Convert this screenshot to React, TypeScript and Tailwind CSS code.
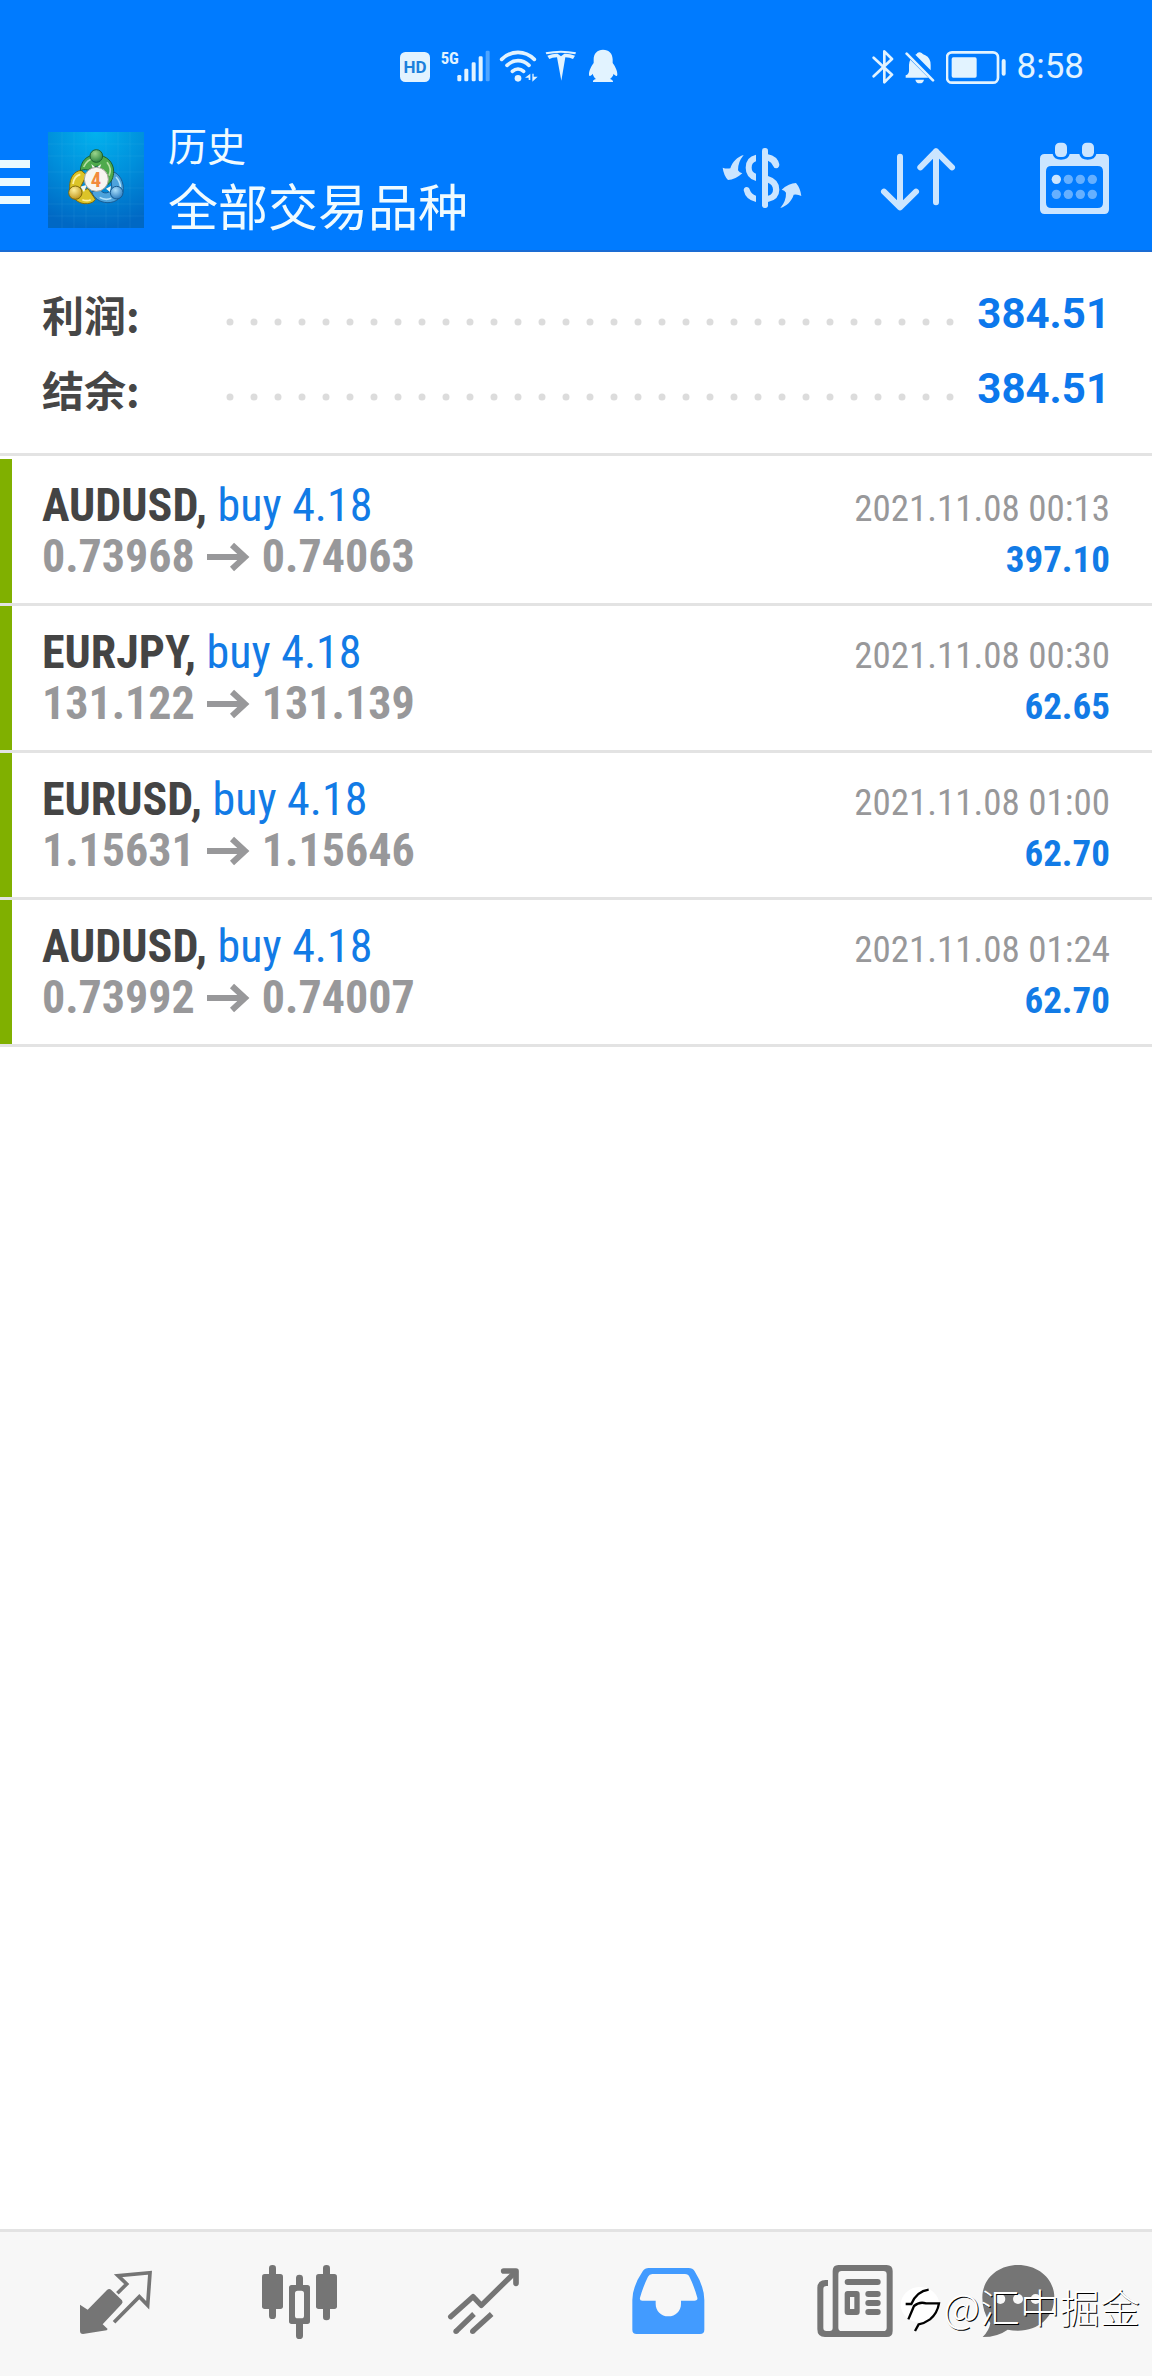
import React from 'react';

const deals = [
  { id: 1, symbol: 'AUDUSD', side: 'buy 4.18', open: '0.73968', close: '0.74063', time: '2021.11.08 00:13', profit: '397.10' },
  { id: 2, symbol: 'EURJPY', side: 'buy 4.18', open: '131.122', close: '131.139', time: '2021.11.08 00:30', profit: '62.65' },
  { id: 3, symbol: 'EURUSD', side: 'buy 4.18', open: '1.15631', close: '1.15646', time: '2021.11.08 01:00', profit: '62.70' },
  { id: 4, symbol: 'AUDUSD', side: 'buy 4.18', open: '0.73992', close: '0.74007', time: '2021.11.08 01:24', profit: '62.70' },
];

const summary = [
  { label: '利润:', value: '384.51' },
  { label: '结余:', value: '384.51' },
];

const StatusBar = () => (
  <div className="flex h-[110px] items-center justify-between pt-6 pr-[68px] pl-[400px] text-[#e2f3ff]">
    <div className="flex items-center gap-[10px]">
      <svg width="30" height="38" viewBox="60 57 90 114" fill="currentColor">
        <rect x="60" y="69" width="90" height="90" rx="16" />
        <text x="105" y="133" textAnchor="middle" fontSize="51" className="fill-[#1b80dc] font-['Roboto',sans-serif] font-bold">HD</text>
      </svg>
      <svg width="50" height="38" viewBox="181 57 150 114" fill="currentColor">
        <text x="183" y="105" fontSize="50" className="font-['Roboto_Condensed','Roboto',sans-serif] font-bold">5G</text>
        <rect x="233" y="138" width="12" height="19" rx="4" />
        <rect x="254" y="119" width="12" height="38" rx="4" />
        <rect x="276" y="100" width="12" height="57" rx="4" />
        <rect x="297" y="82" width="12" height="75" rx="4" />
        <rect x="318" y="65" width="12" height="92" rx="4" opacity="0.35" />
      </svg>
      <svg className="overflow-visible" width="36" height="38" viewBox="360 57 108 114" fill="currentColor">
        <g fill="none" stroke="currentColor" strokeWidth="11" strokeLinecap="round">
          <path d="M365 91Q386 70 414 70Q442 70 463 91" />
          <path d="M381 109Q396 95 414 95Q432 95 447 109" />
          <path d="M397 127Q405 120 414 120Q423 120 431 127" />
        </g>
        <circle cx="414" cy="148" r="10" />
        <path d="M451 134V153H446V146H435ZM457 158V134H461V143H473Z" />
      </svg>
      <svg className="overflow-visible" width="32" height="38" viewBox="498 57 96 114" fill="currentColor">
        <path d="M497 70Q543 61 588 70L586 76Q543 67 499 76Z" />
        <path d="M502 80Q520 73 533 74L543 82L553 74Q568 73 585 80L579 90Q570 85 556 85L544 155L531 85Q516 85 508 90Z" />
      </svg>
      <svg width="30" height="38" viewBox="624 57 90 114" fill="currentColor">
        <path d="M669 62C652 62 641 74 641 91V102C632 114 626 128 627 137C628 144 634 140 638 134C640 142 644 147 648 150C641 152 638 155 639 159H699C700 155 696 152 690 150C695 146 699 141 701 134C705 140 711 144 712 137C713 128 707 114 698 102V91C698 74 687 62 669 62Z" />
      </svg>
    </div>
    <div className="flex items-center gap-[11px]">
      <svg width="22" height="38" viewBox="67 54 66 114" fill="none" stroke="currentColor" strokeWidth="8" strokeLinecap="round" strokeLinejoin="round">
        <path d="M72 83L127 134L104 157V64L127 87L72 139" />
      </svg>
      <svg width="30" height="38" viewBox="166 54 90 114" fill="currentColor">
        <path d="M197 74Q202 72 203 69Q209 65 216 69Q219 73 227 76Q243 84 243 105V121ZM182 89L236 143H168V136Q178 132 178 122V105Q178 96 182 89ZM197 149H223Q221 160 210 160Q199 160 197 149Z" />
        <path d="M171 71L250 151" fill="none" stroke="currentColor" strokeWidth="8" strokeLinecap="round" />
      </svg>
      <svg width="60" height="38" viewBox="289 54 180 114" fill="currentColor">
        <rect x="292" y="67" width="153" height="91" rx="15" fill="none" stroke="currentColor" strokeWidth="8" />
        <rect x="306" y="82" width="75" height="61" rx="5" />
        <rect x="456" y="87" width="12" height="50" rx="6" />
      </svg>
      <span className="font-['Roboto',sans-serif] text-[35px] leading-[38px]">8:58</span>
    </div>
  </div>
);

const AppLogo = () => (
  <svg width="96" height="96" viewBox="144 66 288 288" aria-hidden="true">
    <defs>
      <radialGradient id="sky" cx="0.5" cy="0" r="1">
        <stop offset="0" stopColor="#02b2ee" />
        <stop offset="0.5" stopColor="#0090dc" />
        <stop offset="1" stopColor="#0068c4" />
      </radialGradient>
      <radialGradient id="green" cx="0.4" cy="0.3" r="0.8">
        <stop offset="0" stopColor="#9bd58c" />
        <stop offset="1" stopColor="#1e7a35" />
      </radialGradient>
      <radialGradient id="gold" cx="0.4" cy="0.3" r="0.8">
        <stop offset="0" stopColor="#fff09a" />
        <stop offset="1" stopColor="#b88a0c" />
      </radialGradient>
      <radialGradient id="azure" cx="0.4" cy="0.3" r="0.8">
        <stop offset="0" stopColor="#a9defa" />
        <stop offset="1" stopColor="#1a6fb8" />
      </radialGradient>
    </defs>
    <rect x="144" y="66" width="288" height="288" fill="url(#sky)" />
    <path d="M186 66V354M222 66V354M258 66V354M318 66V354M354 66V354M390 66V354M144 102H432M144 138H432M144 186H432M144 234H432M144 282H432M144 318H432" stroke="#6fd0f5" strokeWidth="1" opacity="0.3" />
    <g strokeWidth="3" strokeLinejoin="round">
      <path d="M331 184C350 184 370 205 370 236C370 262 347 279 321 278C300 277 282 265 275 246L300 238C310 256 330 248 336 238Z" fill="#4da3dc" stroke="#185c94" />
      <path d="M243 181C221 184 209 204 209 230C209 262 236 284 262 281C274 280 282 275 286 268L264 236C255 239 247 240 240 234L260 195Z" fill="#dcc428" stroke="#806908" />
      <path d="M241 182C242 155 259 135 288 135C320 135 341 157 341 184C341 202 334 217 323 224L312 202C314 190 307 176 292 168L262 180C255 177 247 180 241 182Z" fill="#4faa4c" stroke="#1d6130" />
      <path d="M251 171Q263 146 281 147M327 197Q337 177 321 157" fill="none" stroke="#b7e0a7" strokeWidth="5" />
      <path d="M219 222Q222 198 241 193M247 269Q262 275 272 269" fill="none" stroke="#fff0a0" strokeWidth="5" />
      <path d="M348 201Q362 217 361 232M299 262Q315 272 334 265" fill="none" stroke="#b0e0fa" strokeWidth="5" />
    </g>
    <path d="M274 162L288 174L304 162L298 178H279ZM241 230L252 246L261 224ZM318 236L333 228L330 246Z" fill="#f3f8f2" />
    <circle cx="289" cy="138" r="19" fill="url(#green)" stroke="#1d6130" strokeWidth="3" />
    <circle cx="226" cy="248" r="20" fill="url(#gold)" stroke="#806908" strokeWidth="3" />
    <circle cx="350" cy="248" r="19" fill="url(#azure)" stroke="#185c94" strokeWidth="3" />
    <circle cx="289" cy="208" r="36" fill="#f7f5f2" stroke="#a2a49a" strokeWidth="3" />
    <text x="288" y="231" textAnchor="middle" fontSize="62" className="fill-[#f28a3c] font-['Roboto_Condensed','Roboto',sans-serif] font-bold">4</text>
  </svg>
);

const Toolbar = () => (
  <div className="flex h-[140px] items-center">
    <button type="button" aria-label="menu" className="mr-[18px] flex w-[30px] flex-col gap-[10px] pt-1">
      <span className="h-2 w-full bg-[#eafaff]" />
      <span className="h-2 w-full bg-[#eafaff]" />
      <span className="h-2 w-full bg-[#eafaff]" />
    </button>
    <AppLogo />
    <div className="ml-6 flex-1 pb-2 font-['Noto_Sans_CJK_SC',sans-serif] text-[#f0fbff]">
      <p className="text-[39px] leading-[56px]">历史</p>
      <h1 className="text-[50px] leading-[64px]">全部交易品种</h1>
    </div>
    <div className="flex text-[#cbe5ff]">
      <button type="button" aria-label="currency" className="flex w-[156px] justify-center">
        <svg width="96" height="96" viewBox="42 36 288 288" fill="currentColor">
          <path d="M131 105C112 111 97 125 91 145Q79 147 68 143Q71 166 84 180Q105 180 127 160Q118 158 114 151Q113 127 131 105Z" />
          <path d="M241 264C260 258 275 244 281 224Q293 222 304 228Q301 204 288 189Q267 189 245 209Q254 211 258 218Q259 242 241 264Z" />
          <rect x="186" y="84" width="18" height="180" rx="8" />
          <path d="M168 104V124Q155 128 155 143Q155 156 168 161V183Q137 174 137 143Q137 111 168 104Z" />
          <path d="M204 103Q232 108 238 133Q238 144 229 145Q222 145 219 137Q215 126 204 122ZM204 168Q238 178 238 209Q238 239 204 246V227Q219 223 219 209Q219 194 204 188ZM168 246Q137 240 131 211Q131 202 140 201Q147 201 150 211Q154 223 168 227Z" />
        </svg>
      </button>
      <button type="button" aria-label="sort" className="flex w-[156px] justify-center">
        <svg width="96" height="96" viewBox="510 36 288 288" fill="none" stroke="currentColor" strokeWidth="18" strokeLinecap="round" strokeLinejoin="round">
          <path d="M600 110V262M552 215L600 262L648 215M708 247V94M661 142L708 94L756 142" />
        </svg>
      </button>
      <button type="button" aria-label="calendar" className="flex w-[156px] justify-center">
        <svg width="96" height="96" viewBox="978 36 288 288" fill="currentColor">
          <path fillRule="evenodd" d="M1034 102H1058Q1061 119 1083 119Q1106 119 1109 102H1138Q1141 119 1163 119Q1186 119 1189 102H1213Q1227 102 1227 116V268Q1227 282 1213 282H1034Q1020 282 1020 268V116Q1020 102 1034 102ZM1054 138Q1038 138 1038 154V248Q1038 264 1054 264H1193Q1209 264 1209 248V154Q1209 138 1193 138Z" />
          <rect x="1065" y="68" width="36" height="43" rx="14" />
          <rect x="1146" y="68" width="36" height="43" rx="14" />
          <circle cx="1069" cy="178" r="14" />
          <g opacity="0.5">
            <circle cx="1105" cy="178" r="14" />
            <circle cx="1141" cy="178" r="14" />
            <circle cx="1177" cy="178" r="14" />
            <circle cx="1069" cy="223" r="14" />
            <circle cx="1105" cy="223" r="14" />
            <circle cx="1141" cy="223" r="14" />
            <circle cx="1177" cy="223" r="14" />
          </g>
        </svg>
      </button>
    </div>
  </div>
);

const Summary = () => (
  <section className="mb-[3px] border-b-[3px] border-[#e3e3e3] pt-6 pr-[42px] pb-[27px] pl-[42px]">
    {summary.map((item) => (
      <div key={item.label} className="flex h-[75px] items-center">
        <span className="w-[180px] font-['Noto_Sans_CJK_SC',sans-serif] text-[42px] leading-[60px] font-bold text-[#464646]">{item.label}</span>
        <svg className="mt-4 mr-4 h-2 flex-1" aria-hidden="true">
          <line x1="8" y1="4" x2="100%" y2="4" stroke="#dcdcdc" strokeWidth="7" strokeLinecap="round" strokeDasharray="0 24" />
        </svg>
        <span className="font-['Roboto',sans-serif] text-[42px] leading-[60px] font-bold text-[#0c78ec]">{item.value}</span>
      </div>
    ))}
  </section>
);

const DealRow = ({ deal }: { deal: (typeof deals)[number] }) => (
  <li className="flex border-b-[3px] border-[#e3e3e3] font-['Roboto_Condensed','Roboto',sans-serif]">
    <span className="w-3 bg-[#80b000]" />
    <div className="flex-1 py-[21px] pr-[42px] pl-[30px]">
      <div className="flex h-[51px] items-baseline justify-between leading-[51px]">
        <p className="text-[46px] text-[#127be6]">
          <b className="font-bold text-[#444444]">{deal.symbol},</b> {deal.side}
        </p>
        <time className="text-[37px] text-[#98989a]">{deal.time}</time>
      </div>
      <div className="flex h-[51px] items-baseline justify-between leading-[51px] font-bold">
        <p className="flex items-center gap-3 text-[46px] text-[#98989a]">
          {deal.open}
          <svg width="43" height="30" viewBox="0 0 43 30" fill="none" stroke="currentColor" strokeWidth="6" aria-label="→">
            <path d="M0 15H38M25 3L38 15L25 27" />
          </svg>
          {deal.close}
        </p>
        <span className="text-[37px] text-[#127be6]">{deal.profit}</span>
      </div>
    </div>
  </li>
);

const tabs = [
  {
    name: 'quotes',
    view: '204 138 288 288',
    icon: (
      <>
        <path d="M240 284L263 299L321 240Q328 234 334 240L366 271Q370 277 365 282L308 343L323 357L320 361L249 372Q240 372 240 363Z" />
        <path d="M356 246L380 222L354 197L450 188L443 286L418 260L346 333" fill="none" stroke="currentColor" strokeWidth="11" strokeLinecap="square" />
      </>
    ),
  },
  {
    name: 'charts',
    view: '756 138 288 288',
    icon: (
      <>
        <rect x="807" y="165" width="21" height="162" rx="10" />
        <rect x="786" y="192" width="63" height="105" rx="8" />
        <rect x="969" y="165" width="21" height="166" rx="10" />
        <rect x="948" y="192" width="63" height="105" rx="8" />
        <path fillRule="evenodd" d="M888 225V204Q888 194 898 194Q909 194 909 204V225H922Q930 225 930 233V334Q930 342 922 342H909V377Q909 387 898 387Q888 387 888 377V342H875Q867 342 867 334V233Q867 225 875 225ZM893 242Q885 242 885 250V317Q885 325 893 325H904Q912 325 912 317V250Q912 242 904 242Z" />
      </>
    ),
  },
  {
    name: 'trade',
    view: '168 138 288 288',
    icon: (
      <>
        <g fill="none" stroke="currentColor" strokeWidth="16" strokeLinejoin="round">
          <path d="M212 320L279 260L304 286L406 186" strokeLinecap="round" />
          <path d="M228 364L282 312M278 364L335 312" />
        </g>
        <circle cx="228" cy="364" r="8" />
        <circle cx="278" cy="364" r="8" />
        <path d="M371 183H408V220" fill="none" stroke="currentColor" strokeWidth="17" strokeLinecap="round" strokeLinejoin="round" />
      </>
    ),
  },
  {
    name: 'history',
    view: '720 138 288 288',
    icon: (
      <path fillRule="evenodd" d="M806 174H926Q938 174 944 184Q973 230 973 270V359Q973 372 960 372H770Q757 372 757 359V270Q757 230 788 184Q795 174 806 174ZM817 192Q808 192 804 200Q790 228 780 263Q778 272 787 272H827V281C827 303 843 319 865 319C887 319 903 303 903 281V272H943Q954 272 952 263Q942 228 929 202Q925 192 915 192Z" />
    ),
  },
  {
    name: 'news',
    view: '96 138 288 288',
    icon: (
      <>
        <path fillRule="evenodd" d="M196 165H341Q359 165 359 183V363Q359 381 341 381H156Q133 381 133 358V235Q133 210 158 210H165V228H160Q151 228 151 237V354Q151 363 160 363H170Q179 363 179 354V183Q179 165 196 165ZM206 183Q196 183 196 193V353Q196 363 206 363H331Q341 363 341 353V193Q341 183 331 183Z" />
        <rect x="215" y="207" width="108" height="18" rx="9" />
        <path fillRule="evenodd" d="M224 243H251Q260 243 260 252V306Q260 315 251 315H224Q215 315 215 306V252Q215 243 224 243ZM231 261V297H244V261Z" />
        <rect x="277" y="243" width="46" height="18" rx="9" />
        <rect x="277" y="270" width="46" height="18" rx="9" />
        <rect x="277" y="297" width="46" height="18" rx="9" />
      </>
    ),
  },
  {
    name: 'chat',
    view: '594 138 288 288',
    icon: (
      <>
        <path d="M738 165C799 165 847 206 847 263C847 320 799 362 738 362Q722 362 707 359Q677 381 632 381Q652 361 655 339Q631 306 631 263C631 206 678 165 738 165Z" />
        <circle cx="685" cy="267" r="15" className="fill-[#f7f7f7]" />
        <circle cx="738" cy="267" r="15" className="fill-[#f7f7f7]" />
        <circle cx="791" cy="267" r="15" className="fill-[#f7f7f7]" />
      </>
    ),
  },
];

const BottomNav = () => (
  <nav className="relative border-t-[3px] border-[#e3e3e3] bg-[#f7f7f7]">
    <div className="grid h-36 grid-cols-[repeat(5,5fr)_4fr] items-center pr-[60px] pl-6">
      {tabs.map((tab) => (
        <a
          key={tab.name}
          href={`#${tab.name}`}
          aria-label={tab.name}
          className={tab.name === 'history' ? 'flex justify-center text-[#429bff]' : 'flex justify-center text-[#757575]'}
        >
          <svg width="96" height="96" viewBox={tab.view} fill="currentColor">
            {tab.icon}
          </svg>
        </a>
      ))}
    </div>
    <div className="pointer-events-none absolute right-3 bottom-11 flex items-center gap-[2px]">
      <svg className="mt-1" width="42" height="48" viewBox="376 240 126 144" fill="none">
        <ellipse cx="436" cy="302" rx="58" ry="53" fill="#ffffff" />
        <path d="M393 300H410Q426 262 462 257M401 346L418 306Q434 292 454 298H493Q488 328 466 346Q449 358 432 361L421 381" stroke="#000000" strokeWidth="7" />
      </svg>
      <span className="font-['Noto_Sans_CJK_SC',sans-serif] text-[40px] leading-[48px] font-light text-white [text-shadow:1px_1px_0_#000000]">@汇中掘金</span>
    </div>
  </nav>
);

const App = () => {
  return (
    <div className="flex min-h-screen flex-col bg-white">
      <header className="border-b-2 border-[#1a6cd4] bg-[#007bff]">
        <StatusBar />
        <Toolbar />
      </header>
      <main className="flex-1">
        <Summary />
        <ul>
          {deals.map((deal) => (
            <DealRow key={deal.id} deal={deal} />
          ))}
        </ul>
      </main>
      <BottomNav />
    </div>
  );
};

export default App;
